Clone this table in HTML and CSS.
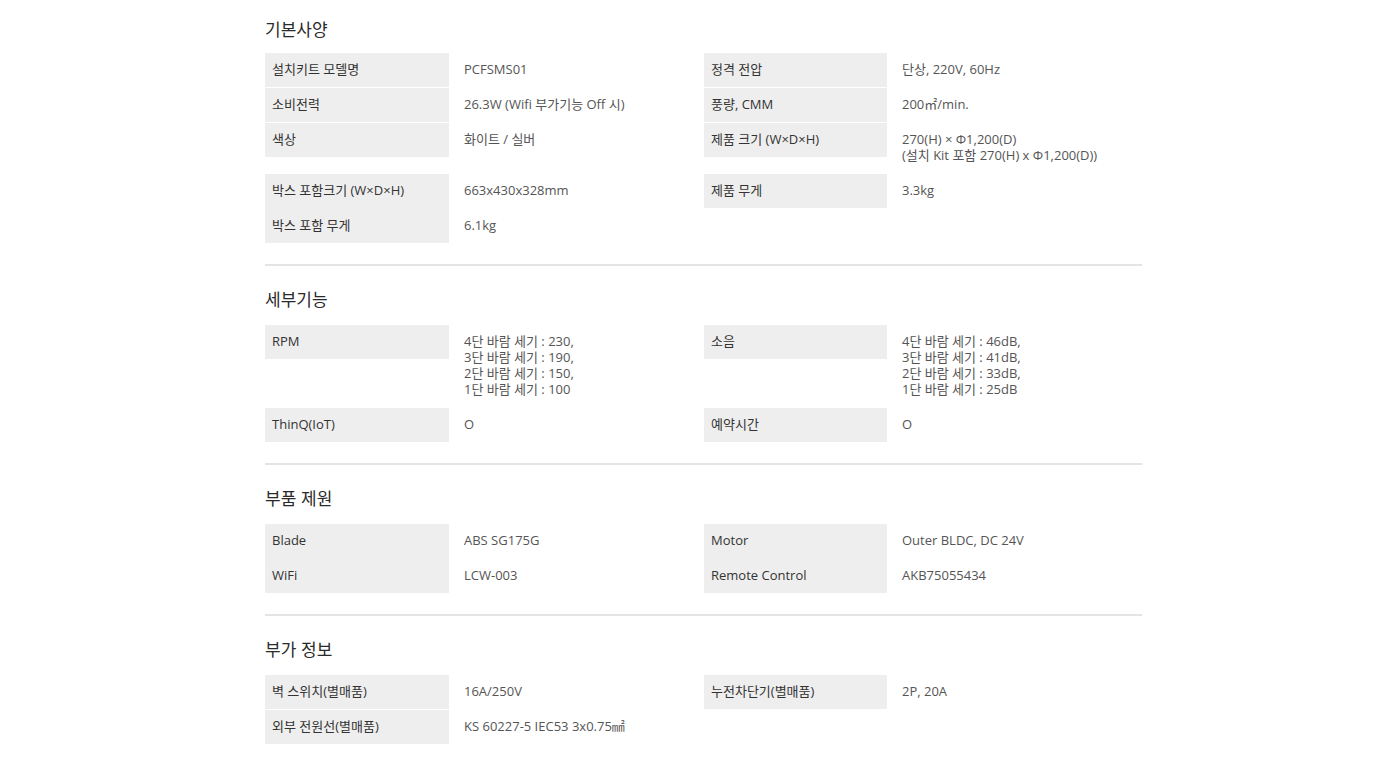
FILE: index.html
```html
<!DOCTYPE html>
<html lang="ko">
<head>
<meta charset="utf-8">
<title>제품 사양</title>
<link rel="stylesheet" href="styles.css">
</head>
<body>
<div class="spec">
  <section class="spec-section first">
    <h3 class="spec-title">기본사양</h3>
    <div class="spec-grid">
      <div class="lbl">설치키트 모델명</div><div class="val">PCFSMS01</div>
      <div class="lbl">정격 전압</div><div class="val">단상, 220V, 60Hz</div>

      <div class="lbl">소비전력</div><div class="val">26.3W (Wifi 부가기능 Off 시)</div>
      <div class="lbl">풍량, CMM</div><div class="val">200㎡/min.</div>

      <div class="lbl">색상</div><div class="val">화이트 / 실버</div>
      <div class="lbl">제품 크기 (W×D×H)</div><div class="val">270(H) × Φ1,200(D)<br>(설치 Kit 포함 270(H) x Φ1,200(D))</div>

      <div class="lbl joined">박스 포함크기 (W×D×H)</div><div class="val">663x430x328mm</div>
      <div class="lbl">제품 무게</div><div class="val">3.3kg</div>

      <div class="lbl">박스 포함 무게</div><div class="val">6.1kg</div>
      <div class="empty"></div><div class="empty"></div>
    </div>
  </section>

  <section class="spec-section">
    <h3 class="spec-title">세부기능</h3>
    <div class="spec-grid">
      <div class="lbl">RPM</div><div class="val">4단 바람 세기 : 230,<br>3단 바람 세기 : 190,<br>2단 바람 세기 : 150,<br>1단 바람 세기 : 100</div>
      <div class="lbl">소음</div><div class="val">4단 바람 세기 : 46dB,<br>3단 바람 세기 : 41dB,<br>2단 바람 세기 : 33dB,<br>1단 바람 세기 : 25dB</div>

      <div class="lbl">ThinQ(IoT)</div><div class="val">O</div>
      <div class="lbl">예약시간</div><div class="val">O</div>
    </div>
  </section>

  <section class="spec-section">
    <h3 class="spec-title">부품 제원</h3>
    <div class="spec-grid">
      <div class="lbl joined">Blade</div><div class="val">ABS SG175G</div>
      <div class="lbl joined">Motor</div><div class="val">Outer BLDC, DC 24V</div>

      <div class="lbl">WiFi</div><div class="val">LCW-003</div>
      <div class="lbl">Remote Control</div><div class="val">AKB75055434</div>
    </div>
  </section>

  <section class="spec-section last">
    <h3 class="spec-title">부가 정보</h3>
    <div class="spec-grid">
      <div class="lbl">벽 스위치(별매품)</div><div class="val">16A/250V</div>
      <div class="lbl">누전차단기(별매품)</div><div class="val">2P, 20A</div>

      <div class="lbl">외부 전원선(별매품)</div><div class="val">KS 60227-5 IEC53 3x0.75㎟</div>
      <div class="empty"></div><div class="empty"></div>
    </div>
  </section>
</div>
</body>
</html>
```

FILE: styles.css
```css
html, body {
  margin: 0;
  padding: 0;
  background: #ffffff;
}

body {
  font-family: "Open Sans", "Noto Sans CJK KR", sans-serif;
  font-size: 13px;
  color: #333333;
}

.spec {
  width: 877px;
  margin-left: 265px;
}

.spec-section {
  padding: 21px 0 20px;
  border-top: 2px solid #e4e4e4;
}

.spec-section.first {
  border-top: 0;
  padding-top: 17px;
}

.spec-section.first .spec-title {
  margin-bottom: 12px;
}

.spec-section.last {
  padding-bottom: 14px;
}

.spec-title {
  margin: 0 0 14px;
  font-size: 17px;
  line-height: 24px;
  font-weight: 400;
  color: #2a2a2a;
  font-family: "Noto Sans CJK KR", "Open Sans", sans-serif;
}

.spec-grid {
  display: grid;
  grid-template-columns: 184px 255px 183px 255px;
  align-items: start;
}

.lbl {
  background: #eeeeee;
  padding: 8px 7px 10px;
  margin-bottom: 1px;
  line-height: 16px;
  color: #333333;
}

.lbl.joined {
  padding-bottom: 11px;
  margin-bottom: 0;
}

.val {
  padding: 8px 15px 11px;
  line-height: 16px;
  color: #555555;
}
```
